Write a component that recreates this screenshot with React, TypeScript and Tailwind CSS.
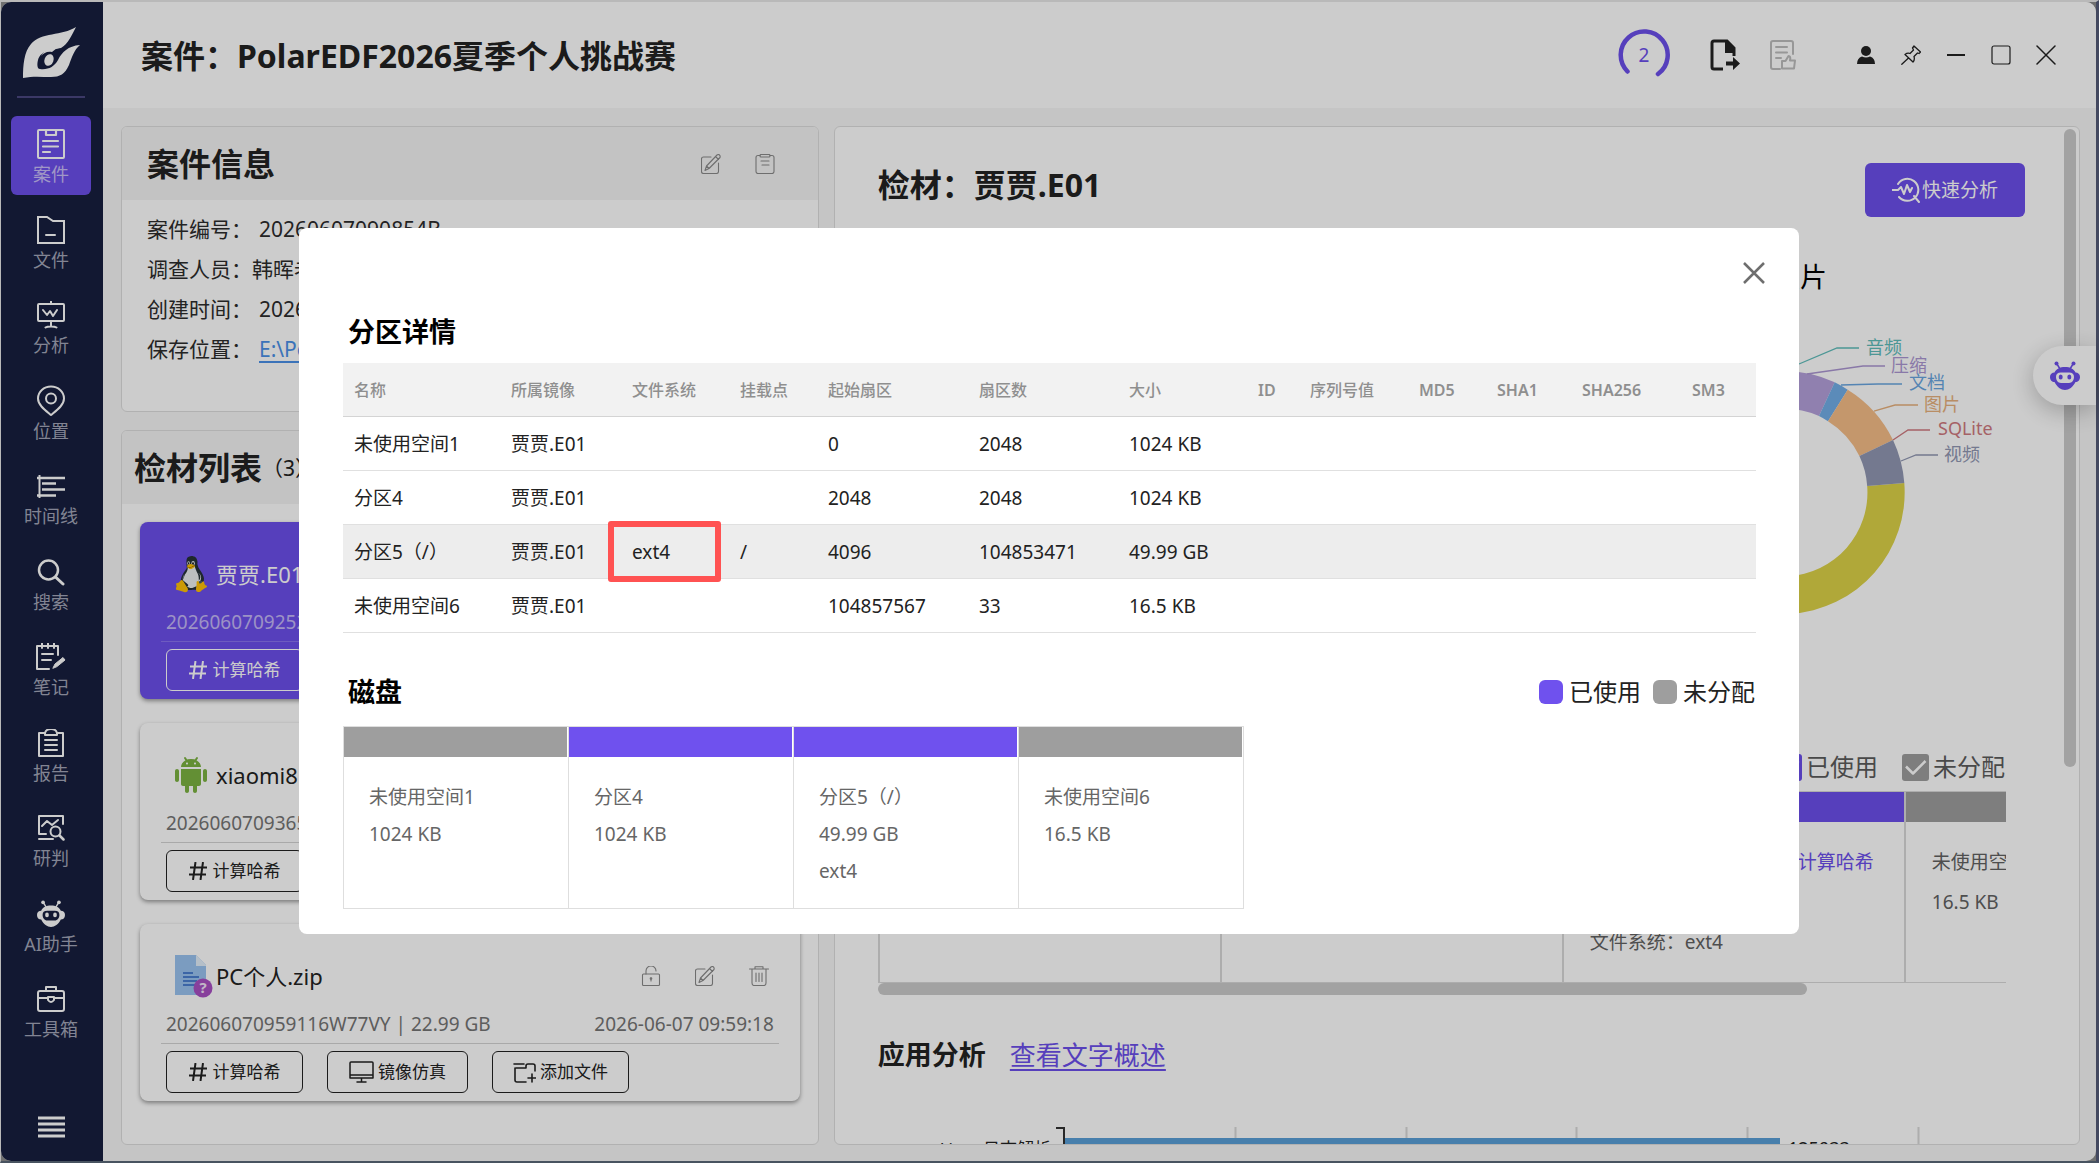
import React from 'react';
import { FcAndroidOs, FcLinux } from 'react-icons/fc';

interface IconProps {
  className?: string;
}

const line = {
  fill: 'none',
  stroke: 'currentColor',
  strokeWidth: 2,
  strokeLinecap: 'round' as const,
  strokeLinejoin: 'round' as const,
};

/* Sidebar icons, all drawn on a 28px grid */

function CaseIcon() {
  return (
    <svg viewBox="0 0 28 28" className="h-7 w-7 overflow-visible" {...line}>
      <rect x="1" y="0" width="26" height="28" rx="1" />
      <path d="M9 0v5h10V0M6 11h15M6 16.500h15M6 22h7" strokeWidth="2.200" />
    </svg>
  );
}

function FileIcon() {
  return (
    <svg viewBox="0 0 28 28" className="h-7 w-7" {...line}>
      <path d="M1 1h9l6 4h11v22H1z" strokeLinejoin="miter" />
      <path d="M9 19h9" />
    </svg>
  );
}

function AnalysisIcon() {
  return (
    <svg viewBox="0 0 28 28" className="h-7 w-7" {...line}>
      <rect x="1" y="3" width="26" height="17" rx="1" />
      <path d="M14 0v3M14 20v5M8.500 26.500c2-1.500 9-1.500 11 0M6 9l4 5 3-4 3 5 4-6" />
    </svg>
  );
}

function PlaceIcon() {
  return (
    <svg viewBox="0 0 28 28" className="h-7 w-7 overflow-visible" {...line}>
      <path d="M14 28C8 23 1 18 1 11.500a13 12 0 0 1 26 0c0 6.500-7 11.500-13 16.500z" />
      <circle cx="14" cy="11.500" r="5" />
    </svg>
  );
}

function TimelineIcon() {
  return (
    <svg viewBox="0 0 28 28" className="h-7 w-7" {...line} strokeWidth="2.500" strokeLinecap="butt">
      <path d="M2.500 3v23" strokeWidth="2" />
      <path d="M0 6h28M5 11.500h14M0 23.500h19M5 17.500h23" />
    </svg>
  );
}

function SearchIcon() {
  return (
    <svg viewBox="0 0 28 28" className="h-7 w-7" {...line} strokeWidth="2.500">
      <circle cx="11.500" cy="12" r="9.500" />
      <path d="M18.500 19l7.500 7" strokeWidth="3" />
    </svg>
  );
}

function NoteIcon() {
  return (
    <svg viewBox="0 0 30 28" className="h-7 w-[30px]" {...line}>
      <path d="M22 12V3H1v23h12M6 0v5M12 0v5M18 0v5M6 11h11M6 17h9" />
      <path d="M17 25l2-4 8-6.500 2 2.500-8 6.500z" fill="currentColor" strokeWidth="1" />
    </svg>
  );
}

function ReportIcon() {
  return (
    <svg viewBox="0 0 28 28" className="h-7 w-7" {...line}>
      <path d="M8 4H2v23h24V4h-6M8 6V4q1-4 6-4t6 4v2zM8 11h12M8 16h12M8 21h12" />
    </svg>
  );
}

function JudgeIcon() {
  return (
    <svg viewBox="0 0 28 28" className="h-7 w-7" {...line}>
      <path d="M26 10V2H2v18h7M2 25h14M5 12l5-5 5 4 6-5" />
      <circle cx="18.500" cy="17.500" r="5" />
      <path d="M22.500 21.500l4 4" strokeWidth="2.500" />
    </svg>
  );
}

function RobotIcon({ className }: IconProps) {
  return (
    <svg viewBox="0 0 30 30" className={className} fill="currentColor">
      <circle cx="6.500" cy="2.500" r="2" />
      <circle cx="23.500" cy="2.500" r="2" />
      <path d="M7 3l3 5M23 3l-3 5" stroke="currentColor" strokeWidth="1.500" />
      <path
        fillRule="evenodd"
        d="M15 6c5 0 9 2 10.500 5.500C28 11.500 30 13 30 16s-2 5-4.500 5C23 26 19 29 15 29S7 26 4.500 21C2 21 0 19 0 16s2-4.500 4.500-4.500C6 8 10 6 15 6zM11 11.500c-3.500 0-5 1.500-5 4.500s2 6 5 6h8c3 0 5-3 5-6s-1.500-4.500-5-4.500z"
      />
      <ellipse cx="10.700" cy="16" rx="2" ry="2.600" />
      <ellipse cx="19.300" cy="16" rx="2" ry="2.600" />
    </svg>
  );
}

function ToolboxIcon() {
  return (
    <svg viewBox="0 0 28 28" className="h-7 w-7" {...line}>
      <rect x="1" y="6" width="26" height="20" rx="2" />
      <path d="M9 6V2h10v4M1 13h10M17 13h10M11 12v3q3 4 6 0v-3z" />
    </svg>
  );
}

/* Small icons of the panels and the title bar */

function EditIcon() {
  return (
    <svg viewBox="0 0 20 20" className="h-5 w-5" {...line} strokeWidth="1.100">
      <path d="M10 3H2.500Q.5 3 .5 5v12.500q0 2 2 2h13q2 0 2-2V9" />
      <path d="M4 16.500l1.500-4.500L16 1q1.500-1 2.500 0t.5 2.500L8 14.500zM14.500 2.500l3 3M5.500 12L8 14.500" />
    </svg>
  );
}

function ClipIcon() {
  return (
    <svg viewBox="0 0 20 20" className="h-5 w-5" {...line} strokeWidth="1.100">
      <path d="M5 1.500H3q-2 0-2 2v14q0 2 2 2h14q2 0 2-2v-14q0-2-2-2h-2" />
      <rect x="5" y=".5" width="10" height="2.500" rx="1" />
      <path d="M6 7h8M7 11h7" />
    </svg>
  );
}

function UnlockIcon() {
  return (
    <svg viewBox="0 0 20 20" className="h-5 w-5" {...line} strokeWidth="1.100">
      <rect x="1.500" y="8" width="17" height="11.500" rx="1" />
      <path d="M5 8V5a5 5 0 0 1 10 0M10 12v3" />
      <circle cx="10" cy="12.500" r=".8" />
    </svg>
  );
}

function TrashIcon() {
  return (
    <svg viewBox="0 0 20 20" className="h-5 w-5" {...line} strokeWidth="1.100">
      <path d="M.5 3h19M6 3V.8h8V3M3 3v14q0 2.500 2 2.500h10q2 0 2-2.500V3M7 7v8.500M10 7v8.500M13 7v8.500" />
    </svg>
  );
}

function LogoIcon() {
  return (
    <svg viewBox="0 0 58 52" className="h-[52px] w-[58px] text-white" fill="currentColor">
      <path
        fillRule="evenodd"
        d="M54 0C50 8 46 17 39 21c-9 2-20 2-23 12-1 4-1 9 2 9 8 1 14-2 18-9 4-8 10-14 22-15-6 5-8 12-11 20-4 9-9 12-18 12-10 0-18-1-28 1 0-13 1-26 8-34C19 5 40 9 54 0z"
      />
      <ellipse cx="27" cy="33" rx="4.500" ry="6" transform="rotate(20 27 33)" />
      <path d="M19 29c4-7 10-8 16-8l-5 4c-5-1-8 1-11 4z" />
    </svg>
  );
}

function ZipFileIcon() {
  return (
    <svg viewBox="0 0 38 43" className="ml-2 h-[43px] w-[38px]">
      <path d="M0 0h21l10 10v30H0z" fill="#9ac4f0" />
      <path d="M21 0l10 10v1H21z" fill="#e3effb" />
      <path d="M8 18h10M8 22h16M8 26h14M8 30h13" stroke="#4a7fd0" strokeWidth="1.800" />
      <circle cx="28" cy="33" r="9.500" fill="#a94fc4" />
      <text x="28" y="38" fontSize="15" fontWeight="700" textAnchor="middle" fill="#f3e3f8">
        ?
      </text>
    </svg>
  );
}

const navItems = [
  { label: '案件', icon: <CaseIcon />, active: true },
  { label: '文件', icon: <FileIcon /> },
  { label: '分析', icon: <AnalysisIcon /> },
  { label: '位置', icon: <PlaceIcon /> },
  { label: '时间线', icon: <TimelineIcon /> },
  { label: '搜索', icon: <SearchIcon /> },
  { label: '笔记', icon: <NoteIcon /> },
  { label: '报告', icon: <ReportIcon /> },
  { label: '研判', icon: <JudgeIcon /> },
  { label: 'AI助手', icon: <RobotIcon className="h-7 w-7" /> },
  { label: '工具箱', icon: <ToolboxIcon /> },
];

function Sidebar() {
  return (
    <aside className="flex w-[102px] shrink-0 flex-col items-center bg-[#171f3f] pr-0.5">
      <div className="flex h-[94px] items-center pt-2">
        <LogoIcon />
      </div>
      <div className="mb-[18px] h-0.5 w-[68px] shrink-0 bg-[#4a4680]" />
      <nav className="flex flex-1 flex-col justify-between">
        {navItems.map(item => (
          <button
            key={item.label}
            className={`flex h-[79px] w-20 flex-col items-center gap-[5px] rounded-md pt-3.5 text-white ${
              item.active ? 'bg-[#6c4fec]' : ''
            }`}
          >
            {item.icon}
            <span
              className={`text-[18px] leading-[22px] ${item.active ? 'text-[#c8bdf8]' : 'text-[#a3a6b8]'}`}
            >
              {item.label}
            </span>
          </button>
        ))}
      </nav>
      <button aria-label="菜单" className="flex h-[111px] items-end pb-[23px] text-white">
        <svg viewBox="0 0 27 22" className="h-[22px] w-[27px]" stroke="currentColor" strokeWidth="3">
          <path d="M0 2h27M0 8h27M0 14h27M0 20h27" />
        </svg>
      </button>
    </aside>
  );
}

function TitleBar() {
  return (
    <header className="flex h-[106px] shrink-0 items-center bg-white pr-7 pl-[38px] text-[#222]">
      <h1 className="flex-1 pt-0.5 text-[32px] leading-10 font-bold">案件：PolarEDF2026夏季个人挑战赛</h1>
      <div className="mr-[26px] grid place-items-center text-[#6c4fec]">
        <svg viewBox="0 0 52 52" className="h-[52px] w-[52px] [grid-area:1/1]" fill="none">
          <path
            d="M9.500 42.500A23.500 23.500 0 1 1 40 45"
            stroke="currentColor"
            strokeWidth="4.500"
            strokeLinecap="round"
          />
        </svg>
        <span className="text-[19px] leading-6 [grid-area:1/1]">2</span>
      </div>
      <button aria-label="导出" className="flex w-[58px] justify-center">
        <svg viewBox="0 0 30 32" className="h-8 w-[30px]">
          <path
            d="M13 30H4q-2 0-2-2V4q0-2 2-2h13l7 7v8"
            fill="none"
            stroke="currentColor"
            strokeWidth="3"
          />
          <path d="M15 1l10 10v3h-10zM16 22.500h7V18l7 6.500-7 6.500v-4.500h-7z" fill="currentColor" />
        </svg>
      </button>
      <button aria-label="评审" className="mr-[31px] flex w-[58px] justify-center text-[#bdbdbd]">
        <svg viewBox="0 0 26 30" className="h-[30px] w-[26px]" {...line}>
          <path d="M10 29H3q-2 0-2-2V3q0-2 2-2h18q2 0 2 2v11M6 7h11M6 12.500h11M6 18h5" />
          <path d="M12 21h3.500l3-5q2.500 0 1.500 4.500h5l-1 8H12z" />
        </svg>
      </button>
      <button aria-label="用户" className="flex w-[45px] justify-center">
        <svg viewBox="0 0 18 18" className="h-[18px] w-[18px]" fill="currentColor">
          <circle cx="9" cy="5" r="5" />
          <path d="M0 18q0-6 5-7.500 4 2 8 0 5 1.500 5 7.500z" />
        </svg>
      </button>
      <button aria-label="置顶" className="flex w-[45px] justify-center">
        <svg viewBox="0 0 20 20" className="h-5 w-5" {...line} strokeWidth="1.300">
          <path d="M13 1l6.500 6-1.500 1.500-1.500-.5-3.500 3.500q1 3.500-1 5.500L4 9.500q2.500-2 5-1L12.500 5 11.500 3zM7.500 13L.8 19.300" />
        </svg>
      </button>
      <button aria-label="最小化" className="flex w-[45px] justify-center">
        <svg viewBox="0 0 18 18" className="h-[18px] w-[18px]" {...line} strokeLinecap="butt">
          <path d="M0 9h18" />
        </svg>
      </button>
      <button aria-label="最大化" className="flex w-[45px] justify-center">
        <svg viewBox="0 0 20 20" className="h-5 w-5" {...line} strokeWidth="1.200">
          <rect x="1" y="1" width="18" height="18" rx="2" />
        </svg>
      </button>
      <button aria-label="关闭窗口" className="flex w-[45px] justify-center">
        <svg viewBox="0 0 20 20" className="h-5 w-5" {...line} strokeWidth="1.500">
          <path d="M1 1l18 18M19 1L1 19" />
        </svg>
      </button>
    </header>
  );
}

function CaseInfo() {
  return (
    <section className="h-[286px] shrink-0 overflow-hidden rounded-md border border-[#dedede] bg-white">
      <div className="flex h-[73px] items-center bg-[#f4f4f4] pr-[43px] pl-[25px]">
        <h2 className="flex-1 text-[32px] leading-10 font-bold text-[#222]">案件信息</h2>
        <div className="flex gap-[34px] text-[#8a8a8a]">
          <button aria-label="编辑案件">
            <EditIcon />
          </button>
          <button aria-label="复制案件信息">
            <ClipIcon />
          </button>
        </div>
      </div>
      <dl className="pt-[9px] pl-[25px] text-[21px] leading-10 text-[#2c2c2c]">
        <div className="flex">
          <dt>案件编号：</dt>
          <dd className="pl-[7px]">20260607090854B</dd>
        </div>
        <div className="flex">
          <dt>调查人员：</dt>
          <dd>韩晖老师</dd>
        </div>
        <div className="flex">
          <dt>创建时间：</dt>
          <dd className="pl-[7px]">2026-06-07 09:08:54</dd>
        </div>
        <div className="flex">
          <dt>保存位置：</dt>
          <dd className="pl-[7px]">
            <a href="#path" className="text-[#4a90e8] underline decoration-2 underline-offset-4">
              E:\PolarEDF
            </a>
          </dd>
        </div>
      </dl>
    </section>
  );
}

const evidences = [
  {
    name: '贾贾.E01',
    icon: <FcLinux className="h-12 w-12" />,
    serial: '20260607092529',
    size: '50.00 GB',
    time: '2026-06-07 09:25:30',
    selected: true,
  },
  {
    name: 'xiaomi8',
    icon: <FcAndroidOs className="h-12 w-12" />,
    serial: '20260607093659',
    size: '12.40 GB',
    time: '2026-06-07 09:37:02',
  },
  {
    name: 'PC个人.zip',
    icon: <ZipFileIcon />,
    serial: '202606070959116W77VY',
    size: '22.99 GB',
    time: '2026-06-07 09:59:18',
  },
];

function EvidenceCard({ item }: { item: (typeof evidences)[number] }) {
  const button = `flex h-[42px] items-center justify-center rounded-md border text-[17px] leading-6 ${
    item.selected ? 'border-white text-white' : 'border-[#222] text-[#222]'
  }`;

  return (
    <li
      className={`h-[177px] shrink-0 rounded-lg px-[21px] pt-7 shadow-[0_2px_4px_rgba(0,0,0,0.4)] ${
        item.selected ? 'bg-[#6c4fec] text-white' : 'bg-white text-[#222]'
      }`}
    >
      <div className="flex h-12 items-center pr-2.5 pl-1.5">
        <span className="flex w-12 shrink-0 items-center">{item.icon}</span>
        <h3 className="flex-1 pl-px text-[22px] leading-7">{item.name}</h3>
        <div className={`flex gap-[34px] ${item.selected ? 'text-white' : 'text-[#8a8a8a]'}`}>
          <button aria-label="解锁">
            <UnlockIcon />
          </button>
          <button aria-label="编辑">
            <EditIcon />
          </button>
          <button aria-label="删除">
            <TrashIcon />
          </button>
        </div>
      </div>
      <div
        className={`mt-1 flex h-10 items-center justify-between border-b px-[5px] text-[19px] leading-6 ${
          item.selected ? 'border-[#8a72f0] text-[#c4b8f7]' : 'border-[#d4d4d4] text-[#757575]'
        }`}
      >
        <span>
          {item.serial} | {item.size}
        </span>
        <span>{item.time}</span>
      </div>
      <div className="mt-[7px] flex gap-6 px-[5px]">
        <button className={`${button} w-[137px] gap-1.5`}>
          <svg viewBox="0 0 18 18" className="h-[18px] w-[18px]" stroke="currentColor" strokeWidth="2">
            <path d="M6.500 0L4 18M14 0l-2.500 18M1 5.500h17M0 12.500h17" />
          </svg>
          计算哈希
        </button>
        <button className={`${button} w-[141px] gap-1`}>
          <svg viewBox="0 0 25 22" className="h-[22px] w-[25px]" {...line} strokeWidth="1.500">
            <path d="M2 1h21q1 0 1 1v15H1V2q0-1 1-1zM1 14h23M12.500 17v4M8 21h9" />
          </svg>
          镜像仿真
        </button>
        <button className={`${button} w-[137px] gap-1`}>
          <svg viewBox="0 0 23 21" className="h-[21px] w-[23px]" {...line} strokeWidth="1.600">
            <path d="M1 2h10M3 6h10V4q0-2 2-2h5q2 0 2 2v5M2 6v12q0 2 2 2h9M15 16h8M19 12v8" />
          </svg>
          添加文件
        </button>
      </div>
    </li>
  );
}

function EvidenceList() {
  return (
    <section className="flex min-h-0 flex-1 flex-col overflow-hidden rounded-md border border-[#dedede] bg-white">
      <div className="flex h-[73px] shrink-0 items-center bg-[#f4f4f4] pl-3 text-[#222]">
        <h2 className="text-[32px] leading-10 font-bold">检材列表</h2>
        <span className="text-[21px] leading-10">（3）</span>
      </div>
      <ul className="flex flex-col gap-6 px-[18px] pt-[18px]">
        {evidences.map(item => (
          <EvidenceCard key={item.name} item={item} />
        ))}
      </ul>
    </section>
  );
}

const pieSlices = [
  { color: '#ddd248', d: 'M244.300 163A121.500 121.500 0 1 1 123.500 51V88.500A84 84 0 1 0 207.200 166z' },
  { color: '#b5a0db', d: 'M123.500 51A121.500 121.500 0 0 1 174.700 62.300L159 96.100A84 84 0 0 0 123.500 88.500z' },
  { color: '#72aee8', d: 'M174.700 62.300A121.500 121.500 0 0 1 187.700 69.700L168 101.300A84 84 0 0 0 159 96.100z' },
  { color: '#f5bd88', d: 'M187.700 69.700A121.500 121.500 0 0 1 233 120L199.400 136.100A84 84 0 0 0 168 101.300z' },
  { color: '#9198b3', d: 'M233 120A121.500 121.500 0 0 1 244.300 163L207.200 166A84 84 0 0 0 199.400 136.100z' },
];

const pieLabels = [
  { text: '音频', color: '#5fbdbb', x: 206, y: 34, line: '139,44 177,28 199,28' },
  { text: '压缩', color: '#ac97d2', x: 231, y: 52, line: '147,54 203,46 225,46' },
  { text: '文档', color: '#6aa6e0', x: 249, y: 69, line: '181,65 218,64 242,64' },
  { text: '图片', color: '#e8b17d', x: 264, y: 91, line: '214,91 235,85 258,85' },
  { text: 'SQLite', color: '#cf7a80', x: 278, y: 115, line: '233,120 248,110 270,110' },
  { text: '视频', color: '#9198b3', x: 284, y: 141, line: '241,141 256,135 278,135' },
];

function FilePie() {
  return (
    <figure className="-mr-[54px] flex flex-col items-end pt-10">
      <figcaption className="w-[287px] text-[27px] leading-10 text-black">照片</figcaption>
      <svg viewBox="0 0 400 320" className="mt-[23px] h-[320px] w-[400px] shrink-0">
        {pieSlices.map(slice => (
          <path key={slice.color} d={slice.d} fill={slice.color} />
        ))}
        {pieLabels.map(label => (
          <g key={label.text}>
            <polyline points={label.line} fill="none" stroke={label.color} strokeWidth="1.300" />
            <text x={label.x} y={label.y} fill={label.color} fontSize="18">
              {label.text}
            </text>
          </g>
        ))}
      </svg>
    </figure>
  );
}

const partitions = [
  { name: '未使用空间1', mount: '', start: '0', count: '2048', size: '1024 KB', fs: '', used: false },
  { name: '分区4', mount: '', start: '2048', count: '2048', size: '1024 KB', fs: '', used: true },
  { name: '分区5（/）', mount: '/', start: '4096', count: '104853471', size: '49.99 GB', fs: 'ext4', used: true },
  { name: '未使用空间6', mount: '', start: '104857567', count: '33', size: '16.5 KB', fs: '', used: false },
];

function LegendCheck({ label, color }: { label: string; color: string }) {
  return (
    <label className="flex items-center gap-1">
      <span className="grid">
        <input
          type="checkbox"
          defaultChecked
          className={`h-[27px] w-[27px] appearance-none rounded-[3px] [grid-area:1/1] ${color}`}
        />
        <svg
          viewBox="0 0 27 27"
          className="pointer-events-none h-[27px] w-[27px] text-white [grid-area:1/1]"
          {...line}
          strokeWidth="2.500"
          strokeLinecap="butt"
        >
          <path d="M4 12.500l7 7L23.500 7" />
        </svg>
      </span>
      {label}
    </label>
  );
}

function DiskOverview() {
  return (
    <div>
      <div className="flex h-10 items-center justify-end gap-6 pr-px text-[24px] leading-10 text-[#5c5c5c]">
        <LegendCheck label="已使用" color="bg-[#6c4fec]" />
        <LegendCheck label="未分配" color="bg-[#9e9e9e]" />
      </div>
      <div className="mt-1 flex overflow-hidden border-y border-l-2 border-[#d9d9d9]">
        {partitions.map(part => (
          <div
            key={part.name}
            className="h-[190px] w-[342px] shrink-0 border-r-2 border-[#d9d9d9] text-[19px] leading-10 text-[#626262]"
          >
            <div className={`h-[30px] ${part.used ? 'bg-[#6c4fec]' : 'bg-[#9e9e9e]'}`} />
            <div className="flex justify-between pt-5 pr-[30px] pl-[26px]">
              <div>
                <p className="whitespace-nowrap">{part.name}</p>
                <p>{part.size}</p>
                {part.fs && <p>文件系统：{part.fs}</p>}
              </div>
              {part.used && (
                <a href="#hash" className="text-[#6c4fec]">
                  计算哈希
                </a>
              )}
            </div>
          </div>
        ))}
      </div>
      <div className="h-3 w-[929px] max-w-full rounded-full bg-[#cbcbcb]" />
    </div>
  );
}

function AppAnalysis() {
  return (
    <div className="pt-10">
      <div className="flex items-center gap-6">
        <h3 className="text-[27px] leading-10 font-bold text-[#222]">应用分析</h3>
        <a href="#summary" className="text-[26px] leading-10 text-[#6c4fec] underline decoration-2 underline-offset-4">
          查看文字概述
        </a>
      </div>
      <svg viewBox="0 0 1128 60" className="mt-[52px] h-[60px] w-[1128px]">
        <path d="M357.500 0v60M528.500 0v60M698.500 0v60M869.500 0v60M1040.500 0v60" stroke="#d9d9d9" strokeWidth="2" />
        <path d="M178 1h8v59" fill="none" stroke="#333" strokeWidth="2" />
        <rect x="187" y="11" width="715" height="40" fill="#599fd7" />
        <text x="173" y="28" fontSize="17" textAnchor="end" fill="#222">
          Linux日志解析
        </text>
        <text x="910" y="28" fontSize="18" fill="#222">
          125933
        </text>
      </svg>
    </div>
  );
}

function EvidenceDetail() {
  return (
    <section className="flex min-h-0 min-w-0 overflow-hidden rounded-md border border-[#dedede] bg-white">
      <div className="min-w-0 flex-1 overflow-hidden pr-[58px] pl-[43px]">
        <div className="flex h-[90px] items-start justify-between pt-9">
          <h2 className="text-[32px] leading-11 font-bold text-[#222]">检材：贾贾.E01</h2>
          <button className="-mr-[19px] flex h-[54px] w-40 items-center justify-center gap-0.5 rounded-md bg-[#6c4fec] text-[19px] text-white">
            <svg viewBox="0 0 28 26" className="h-[26px] w-7" {...line}>
              <path d="M6 7A11 11 0 1 1 7 20M22 19l5 6M0 13h6l3-3 3 7 3-9 3 7 2-4" />
            </svg>
            快速分析
          </button>
        </div>
        <FilePie />
        <div className="pt-[107px]">
          <DiskOverview />
          <AppAnalysis />
        </div>
      </div>
      <div className="w-[15px] shrink-0 pt-0.5">
        <div className="h-[638px] w-3 rounded-full bg-[#cbcbcb]" />
      </div>
    </section>
  );
}

const columns = [
  { title: '名称', width: 'w-[157px]' },
  { title: '所属镜像', width: 'w-[121px]' },
  { title: '文件系统', width: 'w-[108px]' },
  { title: '挂载点', width: 'w-[88px]' },
  { title: '起始扇区', width: 'w-[151px]' },
  { title: '扇区数', width: 'w-[150px]' },
  { title: '大小', width: 'w-[129px]' },
  { title: 'ID', width: 'w-[52px]' },
  { title: '序列号值', width: 'w-[109px]' },
  { title: 'MD5', width: 'w-[78px]' },
  { title: 'SHA1', width: 'w-[85px]' },
  { title: 'SHA256', width: 'w-[110px]' },
  { title: 'SM3', width: 'w-[75px]' },
];

function PartitionTable() {
  return (
    <table className="w-full table-fixed border-collapse text-left text-[#222]">
      <thead>
        <tr className="h-[54px] border-b border-[#d4d4d4] bg-[#f2f2f2] text-[16px] leading-6 text-[#8f8f8f]">
          {columns.map(col => (
            <th key={col.title} scope="col" className={`${col.width} pl-[11px] font-medium whitespace-nowrap`}>
              {/[A-Z]/.test(col.title) ? <span className="font-semibold">{col.title}</span> : col.title}
            </th>
          ))}
        </tr>
      </thead>
      <tbody className="text-[19px] leading-6">
        {partitions.map(part => (
          <tr
            key={part.name}
            className={`h-[54px] border-b border-[#e0e0e0] ${part.fs ? 'bg-[#ededed]' : ''}`}
          >
            <td className="pl-[11px]">{part.name}</td>
            <td className="pl-[11px]">贾贾.E01</td>
            <td className="relative pl-[11px]">
              {part.fs}
              {part.fs && (
                <span className="absolute -inset-y-1 right-2 -left-[13px] rounded-[3px] border-[6px] border-[#ff5252]" />
              )}
            </td>
            <td className="pl-[11px]">{part.mount}</td>
            <td className="pl-[11px]">{part.start}</td>
            <td className="pl-[11px]">{part.count}</td>
            <td className="pl-[11px]">{part.size}</td>
            <td colSpan={6} />
          </tr>
        ))}
      </tbody>
    </table>
  );
}

function PartitionDialog() {
  return (
    <div className="fixed inset-0 flex items-center justify-center bg-black/20 pr-px pb-px">
      <div
        role="dialog"
        aria-modal="true"
        aria-labelledby="partition-title"
        className="w-full max-w-[1500px] rounded-lg bg-white px-11 pb-[25px]"
      >
        <div className="flex h-[84px] items-end justify-end pb-6">
          <button aria-label="关闭" className="-mr-3.5 flex h-[30px] w-[30px] items-center justify-center text-[#6e6e6e]">
            <svg viewBox="0 0 22 22" className="h-[22px] w-[22px]" {...line} strokeWidth="2.500" strokeLinecap="butt">
              <path d="M1 1l20 20M21 1L1 21" />
            </svg>
          </button>
        </div>
        <h2 id="partition-title" className="mb-[11px] pl-[5px] text-[27px] leading-10 font-bold text-black">
          分区详情
        </h2>
        <PartitionTable />

        <div className="mt-[39px] flex h-10 items-center justify-between">
          <h2 className="pl-[5px] text-[27px] leading-10 font-bold text-black">磁盘</h2>
          <div className="flex items-center gap-3 text-[24px] leading-10 text-[#222]">
            <span className="flex items-center gap-1.5">
              <span className="h-6 w-6 rounded-md bg-[#6f51ee]" />
              已使用
            </span>
            <span className="flex items-center gap-1.5">
              <span className="h-6 w-6 rounded-md bg-[#9e9e9e]" />
              未分配
            </span>
          </div>
        </div>
        <div className="mt-3.5 flex w-[901px] max-w-full border-y border-l border-[#dedede]">
          {partitions.map(part => (
            <div
              key={part.name}
              className="h-[181px] flex-1 border-r border-[#dedede] text-[19px] leading-[37px] text-[#666]"
            >
              <div className={`mr-px h-[30px] ${part.used ? 'bg-[#6f51ee]' : 'bg-[#9e9e9e]'}`} />
              <div className="pt-[22px] pl-[25px]">
                <p>{part.name}</p>
                <p>{part.size}</p>
                <p>{part.fs}</p>
              </div>
            </div>
          ))}
        </div>
      </div>
    </div>
  );
}

export default function App() {
  return (
    <div className="h-screen overflow-hidden border-t-2 border-r-[3px] border-b-2 border-l border-t-[#e8e8e8] border-r-[#565c78] border-b-[#5b6878] border-l-[#e8e8e8] bg-[#8d8d8d] font-['Noto_Sans','Noto_Sans_CJK_SC',sans-serif]">
      <div className="flex h-full overflow-hidden rounded-[10px] bg-[#f7f7f7]">
        <Sidebar />
        <div className="flex min-w-0 flex-1 flex-col">
          <TitleBar />
          <main className="grid min-h-0 flex-1 grid-cols-[56fr_100fr] gap-[15px] pt-[18px] pr-4 pb-4 pl-[18px]">
            <div className="flex min-h-0 min-w-0 flex-col gap-[18px]">
              <CaseInfo />
              <EvidenceList />
            </div>
            <EvidenceDetail />
          </main>
        </div>
      </div>

      {/* Assistant tab docked to the right edge */}
      <button
        aria-label="AI助手"
        className="fixed top-[346px] right-[3px] flex h-[59px] w-[63px] items-center rounded-l-full bg-white pl-[17px] text-[#6c4fec] shadow-[0_6px_24px_rgba(0,0,0,0.25)]"
      >
        <RobotIcon className="h-[30px] w-[30px]" />
      </button>

      <PartitionDialog />
    </div>
  );
}
